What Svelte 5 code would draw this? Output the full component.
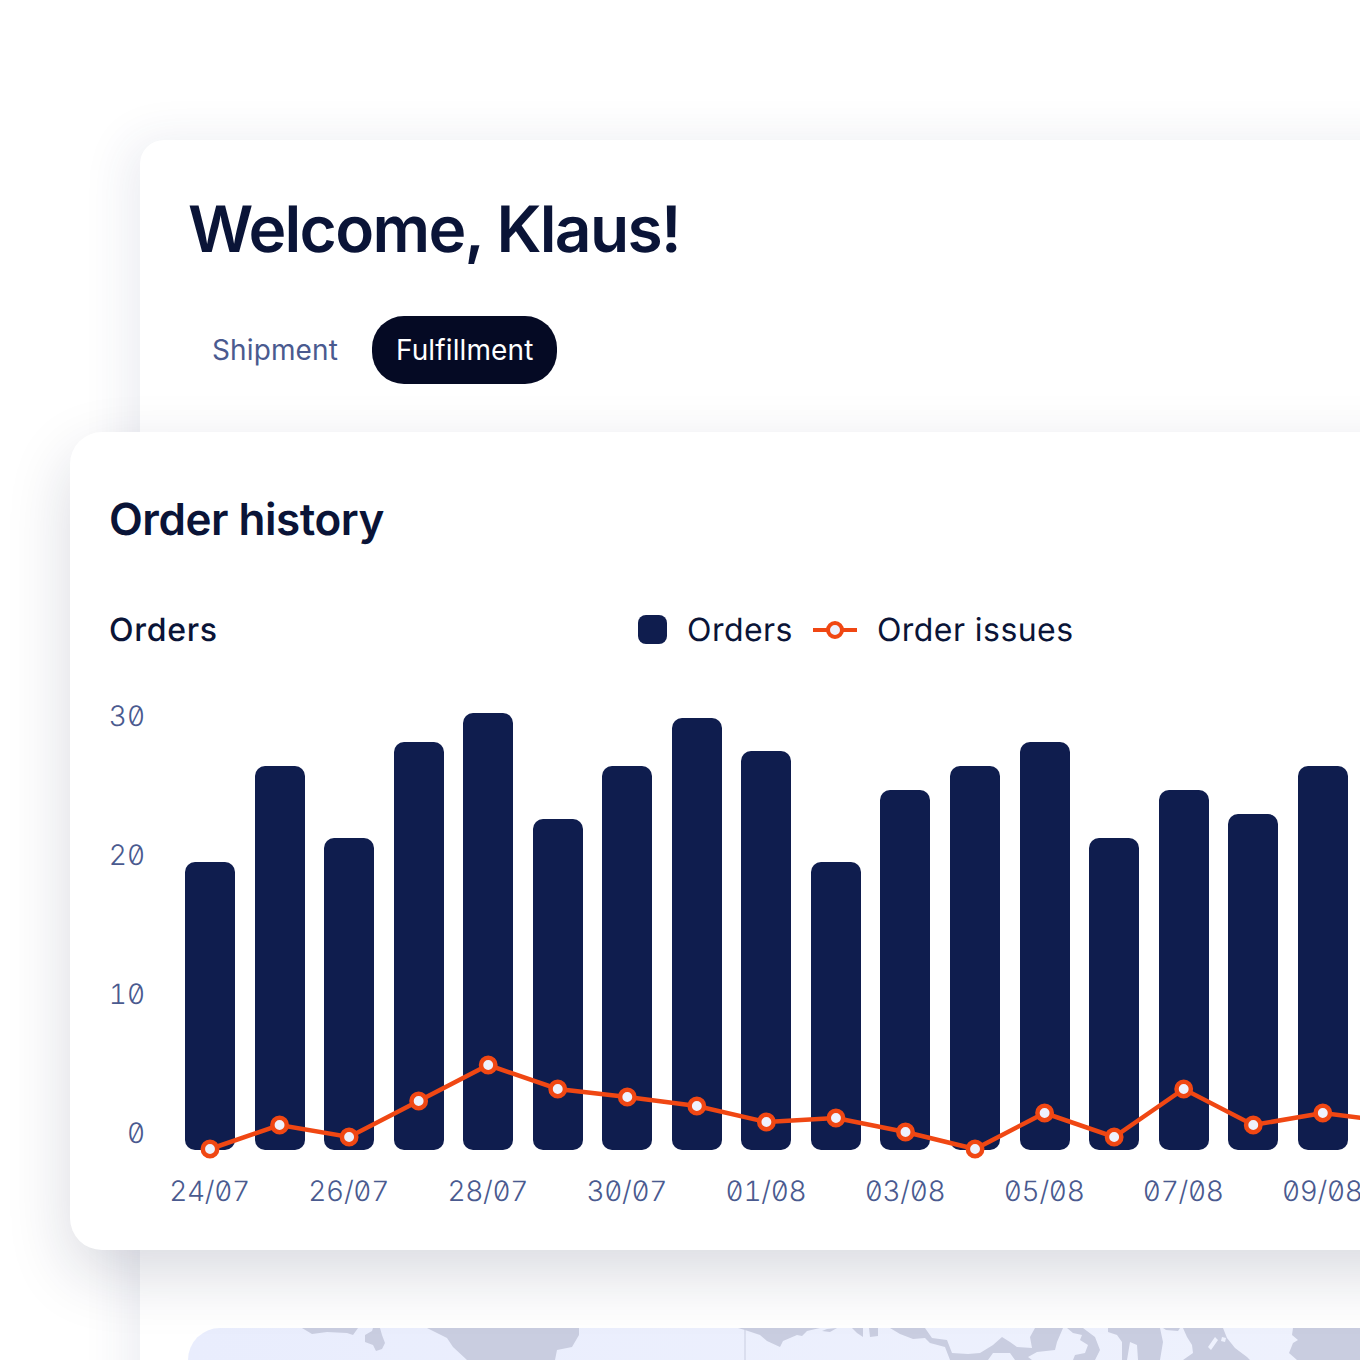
<script>
  const bars = [
    { top: 862, y: 1149 },
    { top: 766, y: 1125 },
    { top: 838, y: 1137 },
    { top: 742, y: 1101 },
    { top: 713, y: 1065 },
    { top: 819, y: 1089 },
    { top: 766, y: 1097 },
    { top: 718, y: 1106 },
    { top: 751, y: 1122 },
    { top: 862, y: 1118 },
    { top: 790, y: 1132 },
    { top: 766, y: 1149 },
    { top: 742, y: 1113 },
    { top: 838, y: 1137 },
    { top: 790, y: 1089 },
    { top: 814, y: 1125 },
    { top: 766, y: 1113 },
    { top: 742, y: 1122 }
  ];

  const step = 69.55;
  const plotTop = 700;
  const baseline = 1150;

  const points = bars.map((b, i) => ({
    x: 25 + i * step,
    y: b.y - plotTop
  }));
  const linePoints = points.map((p) => `${p.x},${p.y}`).join(' ');

  const yTicks = ['30', '20', '10', '0'];
  const dates = ['24/07', '26/07', '28/07', '30/07', '01/08', '03/08', '05/08', '07/08', '09/08'];

  // land outlines of the map strip, x/y local to the map panel
  const land = [
    'M114 0L124 6L139 4L159 5L165 7L170 0Z',
    'M177 7L184 3L185 0H192L194 7L197 15L194 21L188 23L185 17L177 14Z',
    'M214 0H239L259 10L265 19L279 32H367L369 22L384 19L391 7V0Z',
    'M550 0L557 2L572 7L579 13L592 19L595 13L609 7L614 8L619 3L632 0Z',
    'M634 3L639 1L649 0L642 4Z',
    'M664 0L669 5L675 9V0Z',
    'M681 0L682 9L690 8V0Z',
    'M702 0H737L744 10L759 12L764 25L780 26L792 25L805 17L814 9L822 14L829 19L844 20L842 9L847 0H875L869 14L867 22L849 24L840 29L844 32H827L822 25H805L800 32H762L757 19L742 15L737 10L725 11L712 6Z',
    'M879 0H895L907 9L912 22L907 32H885L887 27L897 25L900 17L892 12L894 7L885 5Z',
    'M920 0H972L975 14L972 32H950L949 17L942 14L939 32H934V14L929 7L920 4Z',
    'M975 0H992L990 3L978 2Z',
    'M995 0H1035L1039 10L1047 20L1059 29L1062 32H995L1005 25L1004 17L999 9ZM1020 19L1027 9L1030 12L1023 22ZM1034 9L1038 10L1037 14L1033 13Z',
    'M1105 0H1172V32H1109L1101 25L1105 15L1110 12L1104 7Z'
  ];
</script>

<div class="page">
  <section class="backCard">
    <h1>Welcome, Klaus!</h1>
    <div class="tabs">
      <button class="tab">Shipment</button>
      <button class="tab active">Fulfillment</button>
    </div>

    <section class="historyCard">
      <h2>Order history</h2>

      <div class="legendRow">
        <span class="axisTitle">Orders</span>
        <div class="legend">
          <span class="swatch"></span>
          <span class="legendName">Orders</span>
          <svg class="lineKey" width="44" height="20" viewBox="0 0 44 20">
            <path d="M0 10H44" stroke="#f04713" stroke-width="4" />
            <circle cx="22" cy="10" r="7" fill="#eef2fd" stroke="#f04713" stroke-width="4" />
          </svg>
          <span class="legendName">Order issues</span>
        </div>
      </div>

      <div class="chart">
        <div class="yAxis">
          {#each yTicks as tick}
            <span>{tick}</span>
          {/each}
        </div>

        <div class="plot">
          {#each bars as bar}
            <div class="bar" style="height: {baseline - bar.top}px"></div>
          {/each}

          <svg class="issues" width="1300" height="470" viewBox="0 0 1300 470">
            <polyline points={linePoints} fill="none" stroke="#f04713" stroke-width="4.5" />
            {#each points as p}
              <circle cx={p.x} cy={p.y} r="7.2" fill="#eef2fd" stroke="#f04713" stroke-width="4.5" />
            {/each}
          </svg>
        </div>
      </div>

      <div class="xAxis">
        {#each dates as date}
          <span class="date">{date}</span>
        {/each}
      </div>
    </section>

    <div class="map">
      <svg width="1172" height="32" viewBox="0 0 1172 32">
        <path d="M557 0V32" stroke="#c9cde0" stroke-width="1" />
        {#each land as d}
          <path {d} fill="#c9cde0" fill-rule="evenodd" />
        {/each}
      </svg>
    </div>
  </section>
</div>

<style>
  :global(body) {
    margin: 0;
    background: #ffffff;
  }

  .page {
    height: 1360px;
    overflow: hidden;
    padding: 140px 0 0 140px;
    box-sizing: border-box;
    font-family: Inter, "Liberation Sans", sans-serif;
    color: #0f1c4d;
    text-rendering: geometricPrecision;
  }

  .backCard {
    width: 1400px;
    height: 1300px;
    box-sizing: border-box;
    padding: 50px 48px 0;
    background: #ffffff;
    border-radius: 24px;
    box-shadow: -12px 0 48px rgba(40, 50, 110, 0.09);
  }

  h1 {
    margin: 0;
    font-size: 64px;
    line-height: 80px;
    font-weight: 600;
    letter-spacing: -1.68px;
    color: #0a1437;
  }

  .tabs {
    display: flex;
    gap: 10px;
    margin-top: 46px;
  }

  .tab {
    height: 68px;
    padding: 0 24px;
    border: 0;
    border-radius: 32px;
    background: transparent;
    font: 400 28px Inter, sans-serif;
    letter-spacing: 0.12px;
    color: #4a5a8f;
  }

  .tab.active {
    background: #050a24;
    color: #ffffff;
  }

  .historyCard {
    width: 1400px;
    height: 818px;
    box-sizing: border-box;
    margin: 48px 0 78px -118px;
    padding: 59px 0 0 39px;
    background: #ffffff;
    border-radius: 32px;
    box-shadow: 0 24px 64px rgba(20, 25, 60, 0.16);
    position: relative;
  }

  h2 {
    margin: 0;
    font-size: 44px;
    line-height: 56px;
    font-weight: 600;
    letter-spacing: -0.46px;
    color: #0a1437;
  }

  .legendRow {
    display: flex;
    align-items: center;
    height: 40px;
    margin-top: 62px;
    font-size: 32px;
    color: #0a1437;
  }

  .axisTitle {
    width: 529px;
    font-weight: 500;
    letter-spacing: 0.7px;
  }

  .legend {
    display: flex;
    align-items: center;
    gap: 20px;
  }

  .legendName {
    letter-spacing: 0.45px;
  }

  .lineKey {
    margin-top: 2px;
  }

  .swatch {
    width: 29px;
    height: 29px;
    border-radius: 8px;
    background: #0f1d4e;
  }

  .chart {
    display: flex;
    height: 470px;
    margin-top: 51px;
  }

  .yAxis {
    width: 36px;
    height: 556px;
    margin-top: -1px;
    display: flex;
    flex-direction: column;
    align-items: flex-end;
    font: 350 28px Inter, sans-serif;
    font-feature-settings: "tnum", "zero";
    color: #4a5a8f;
  }

  .yAxis span {
    height: 139px;
  }

  .plot {
    position: relative;
    display: flex;
    align-items: flex-end;
    gap: 19.55px;
    height: 450px;
    margin-left: 40px;
  }

  .bar {
    flex: none;
    width: 50px;
    border-radius: 10px;
    background: #0f1d4e;
  }

  .issues {
    position: absolute;
    left: 0;
    top: 0;
    overflow: visible;
  }

  .xAxis {
    display: flex;
    margin-left: 31px;
    margin-top: 4px;
    font: 350 28px Inter, sans-serif;
    font-feature-settings: "tnum", "zero";
    letter-spacing: -0.3px;
    color: #4a5a8f;
  }

  .date {
    flex: none;
    width: 139.1px;
    text-align: center;
  }

  .map {
    height: 32px;
    overflow: hidden;
    border-radius: 32px 0 0 0;
    background: linear-gradient(90deg, #e9edfd, #eff2fd);
  }

  .map svg {
    display: block;
  }
</style>
